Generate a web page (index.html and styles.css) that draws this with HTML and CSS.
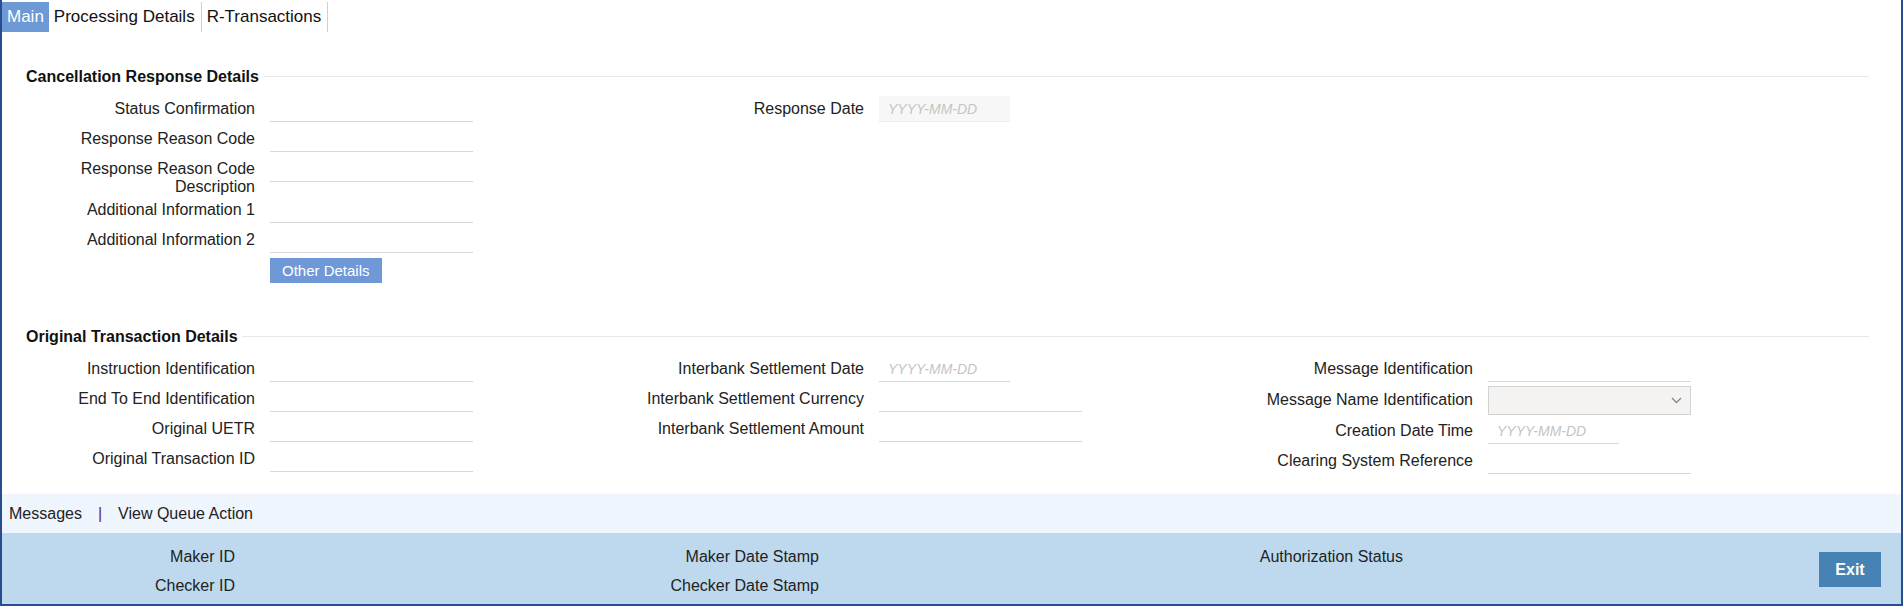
FILE: index.html
```html
<!DOCTYPE html>
<html>
<head>
    <title>Cancellation Response</title>
    <link rel="stylesheet" href="styles.css">
</head>
<body>
<div class="window">
    <ul class="tabs">
        <li class="active">Main</li>
        <li>Processing Details</li>
        <li>R-Transactions</li>
    </ul>

    <div class="content">
        <div class="section first">
            <h2 class="section-title">Cancellation Response Details</h2>
            <div class="columns">
                <div class="col">
                    <div class="field"><label>Status Confirmation</label><input type="text"></div>
                    <div class="field"><label>Response Reason Code</label><input type="text"></div>
                    <div class="field tall"><label>Response Reason Code Description</label><input type="text"></div>
                    <div class="field"><label>Additional Information 1</label><input type="text"></div>
                    <div class="field"><label>Additional Information 2</label><input type="text"></div>
                    <div class="field actions"><label></label><button class="btn">Other Details</button></div>
                </div>
                <div class="col">
                    <div class="field"><label>Response Date</label><input type="text" class="date shaded" placeholder="YYYY-MM-DD"></div>
                </div>
                <div class="col"></div>
            </div>
        </div>

        <div class="section second">
            <h2 class="section-title">Original Transaction Details</h2>
            <div class="columns">
                <div class="col">
                    <div class="field"><label>Instruction Identification</label><input type="text"></div>
                    <div class="field"><label>End To End Identification</label><input type="text"></div>
                    <div class="field"><label>Original UETR</label><input type="text"></div>
                    <div class="field"><label>Original Transaction ID</label><input type="text"></div>
                </div>
                <div class="col">
                    <div class="field"><label>Interbank Settlement Date</label><input type="text" class="date" placeholder="YYYY-MM-DD"></div>
                    <div class="field"><label>Interbank Settlement Currency</label><input type="text"></div>
                    <div class="field"><label>Interbank Settlement Amount</label><input type="text"></div>
                </div>
                <div class="col">
                    <div class="field"><label>Message Identification</label><input type="text"></div>
                    <div class="field select-row">
                        <label>Message Name Identification</label>
                        <div class="select">
                            <svg width="11" height="7" viewBox="0 0 11 7"><path d="M1 1l4.5 4.5L10 1" fill="none" stroke="#8a8a8a" stroke-width="1.4"/></svg>
                        </div>
                    </div>
                    <div class="field"><label>Creation Date Time</label><input type="text" class="date" placeholder="YYYY-MM-DD"></div>
                    <div class="field"><label>Clearing System Reference</label><input type="text"></div>
                </div>
            </div>
        </div>
    </div>

    <div class="links">
        <a href="#">Messages</a><span class="sep">|</span><a href="#">View Queue Action</a>
    </div>

    <div class="audit">
        <div class="audit-cols">
            <div class="audit-col">
                <div class="audit-label">Maker ID</div>
                <div class="audit-label">Checker ID</div>
            </div>
            <div class="audit-col">
                <div class="audit-label">Maker Date Stamp</div>
                <div class="audit-label">Checker Date Stamp</div>
            </div>
            <div class="audit-col">
                <div class="audit-label">Authorization Status</div>
            </div>
        </div>
        <button class="exit">Exit</button>
    </div>
</div>
</body>
</html>
```

FILE: styles.css
```css
body {
    margin: 0;
    font-family: "Liberation Sans", Arial, sans-serif;
    font-size: 16px;
    color: #222;
    background: #fff;
}
.window {
    height: 606px;
    box-sizing: border-box;
    border: 2px solid #284c8e;
    border-top: none;
    display: flex;
    flex-direction: column;
}
.tabs {
    list-style: none;
    margin: 0;
    padding: 2px 0 0 0;
    display: flex;
    height: 30px;
}
.tabs li {
    padding: 0 6px 0 5px;
    line-height: 30px;
    font-size: 17px;
    color: #111;
    border-right: 1px solid #cfcfcf;
}
.tabs li.active {
    background-color: #6d99d5;
    color: #fff;
    border-right: none;
    padding: 0 5px;
}
.content {
    flex: 1;
}
.section.first {
    padding-top: 36px;
}
.section.second {
    margin-top: 45px;
}
.section-title {
    margin: 0 32px 0 24px;
    font-size: 16px;
    font-weight: bold;
    line-height: 18px;
    color: #111;
    display: flex;
    align-items: center;
}
.section-title::after {
    content: '';
    flex: 1;
    border-top: 1px solid #e8e8e8;
    margin-left: 4px;
    margin-top: -2px;
}
.columns {
    display: flex;
    padding-left: 6px;
    margin-top: 11px;
}
.col {
    width: 609px;
}
.field {
    display: flex;
    align-items: flex-start;
    height: 30px;
}
.field.tall {
    height: 41px;
}
.field.select-row {
    height: 32px;
}
.field.actions {
    height: 25px;
}
.field label {
    flex: none;
    width: 247px;
    margin-right: 15px;
    padding-top: 3px;
    line-height: 18px;
    text-align: right;
}
.select-row label {
    padding-top: 4px;
}
input[type="text"] {
    width: 203px;
    height: 25px;
    margin: 0;
    box-sizing: border-box;
    border: none;
    border-bottom: 1px solid #d6d6d6;
    padding: 0 9px;
    font-family: inherit;
    font-size: 14px;
    background: transparent;
    outline: none;
}
input.date {
    width: 131px;
}
input.shaded {
    background-color: #f7f7f7;
    border-bottom-color: #ececec;
    height: 26px;
    margin-top: -1px;
}
input::placeholder {
    color: #c4c4c4;
    font-style: italic;
}
.select {
    width: 203px;
    height: 29px;
    margin-top: -1px;
    box-sizing: border-box;
    border: 1px solid #d2d2d2;
    background-color: #f4f3f1;
    display: flex;
    align-items: center;
    justify-content: flex-end;
    padding-right: 8px;
}
.btn {
    height: 25px;
    margin: 0;
    padding: 0 12px;
    border: none;
    background-color: #6e98d6;
    color: #fff;
    font-family: inherit;
    font-size: 15px;
    cursor: pointer;
}
.links {
    height: 39px;
    line-height: 39px;
    background-color: #eef5fd;
    padding-left: 7px;
}
.links a {
    color: #222;
    text-decoration: none;
}
.links .sep {
    margin: 0 16px;
    color: #6b1f5f;
}
.audit {
    height: 71px;
    background-color: #bed9ee;
    display: flex;
    align-items: flex-start;
}
.audit-cols {
    display: grid;
    grid-template-columns: 584px 584px 584px;
    padding-top: 15px;
}
.audit-label {
    width: 233px;
    text-align: right;
    line-height: 18px;
    margin-bottom: 11px;
}
.exit {
    margin: 19px 20px 0 auto;
    width: 62px;
    height: 35px;
    border: none;
    background-color: #4682b4;
    color: #fff;
    font-family: inherit;
    font-size: 16px;
    font-weight: bold;
    cursor: pointer;
}
```
